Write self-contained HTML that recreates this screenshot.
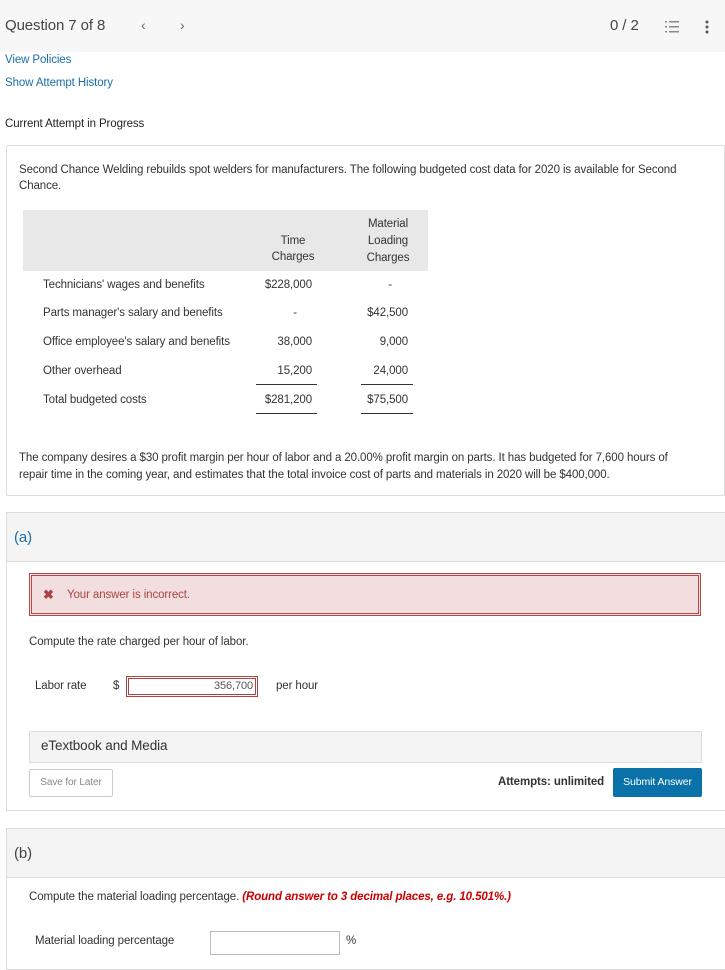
<!DOCTYPE html><html><head><style>
body{margin:0;width:725px;height:965px;overflow:hidden;font-family:"Liberation Sans",sans-serif;font-size:11.5px;color:#333;background:#fff;position:relative;letter-spacing:-0.1px}
.a{position:absolute;white-space:nowrap}
a{color:#1a6fa8;text-decoration:none}
.r{text-align:right}
</style></head><body>
<div class="a" style="left:0;top:0;width:725px;height:52px;background:#f7f7f7"></div>
<div class="a" style="left:5px;top:17px;font-size:15px;color:#444">Question 7 of 8</div>
<div class="a" style="left:141px;top:17px;font-size:14px;color:#666">&lsaquo;</div>
<div class="a" style="left:180px;top:17px;font-size:14px;color:#666">&rsaquo;</div>
<div class="a" style="left:610px;top:17px;font-size:15px;color:#444">0 / 2</div>
<svg class="a" style="left:665px;top:21px" width="14" height="12"><g fill="#888"><rect x="4" y="0" width="10" height="1.5"/><rect x="4" y="5" width="10" height="1.5"/><rect x="4" y="10" width="10" height="1.5"/><rect x="0" y="0" width="2" height="1.5"/><rect x="0" y="5" width="2" height="1.5"/><rect x="0" y="10" width="2" height="1.5"/></g></svg>
<svg class="a" style="left:705px;top:20px" width="4" height="14"><g fill="#555"><circle cx="2" cy="2" r="1.5"/><circle cx="2" cy="7" r="1.5"/><circle cx="2" cy="12" r="1.5"/></g></svg>
<a class="a" style="left:5px;top:54px">View Policies</a>
<a class="a" style="left:5px;top:77px">Show Attempt History</a>
<div class="a" style="left:5px;top:118px;color:#222">Current Attempt in Progress</div>

<div class="a" style="left:6px;top:145px;width:717px;height:349px;border:1px solid #ddd;border-radius:2px"></div>
<div class="a" style="left:19px;top:162px;line-height:16px">Second Chance Welding rebuilds spot welders for manufacturers. The following budgeted cost data for 2020 is available for Second<br>Chance.</div>
<div class="a" style="left:23px;top:210px;width:405px;height:61px;background:#e8e8e8"></div>
<div class="a" style="left:253px;top:233px;width:80px;text-align:center;line-height:16px">Time<br>Charges</div>
<div class="a" style="left:348px;top:216px;width:80px;text-align:center;line-height:17px">Material<br>Loading<br>Charges</div>
<div class="a" style="left:43px;top:279px">Technicians' wages and benefits</div>
<div class="a" style="left:43px;top:307px">Parts manager's salary and benefits</div>
<div class="a" style="left:43px;top:336px">Office employee's salary and benefits</div>
<div class="a" style="left:43px;top:365px">Other overhead</div>
<div class="a" style="left:43px;top:394px">Total budgeted costs</div>
<div class="a r" style="left:240px;width:72px;top:279px">$228,000</div>
<div class="a r" style="left:240px;width:57px;top:307px">-</div>
<div class="a r" style="left:240px;width:72px;top:336px">38,000</div>
<div class="a r" style="left:240px;width:72px;top:365px">15,200</div>
<div class="a r" style="left:240px;width:72px;top:394px">$281,200</div>
<div class="a r" style="left:330px;width:62px;top:279px">-</div>
<div class="a r" style="left:330px;width:78px;top:307px">$42,500</div>
<div class="a r" style="left:330px;width:78px;top:336px">9,000</div>
<div class="a r" style="left:330px;width:78px;top:365px">24,000</div>
<div class="a r" style="left:330px;width:78px;top:394px">$75,500</div>
<div class="a" style="left:256px;top:384px;width:61px;border-top:1px solid #333"></div>
<div class="a" style="left:256px;top:413px;width:61px;border-top:1px solid #333"></div>
<div class="a" style="left:361px;top:384px;width:52px;border-top:1px solid #333"></div>
<div class="a" style="left:361px;top:413px;width:52px;border-top:1px solid #333"></div>
<div class="a" style="left:19px;top:450px;line-height:17px">The company desires a $30 profit margin per hour of labor and a 20.00% profit margin on parts. It has budgeted for 7,600 hours of<br>repair time in the coming year, and estimates that the total invoice cost of parts and materials in 2020 will be $400,000.</div>

<div class="a" style="left:6px;top:512px;width:720px;height:297px;border:1px solid #ddd"></div>
<div class="a" style="left:7px;top:513px;width:718px;height:48px;background:#f4f4f4;border-bottom:1px solid #ddd"></div>
<div class="a" style="left:14px;top:529px;font-size:15px;color:#1a6fa8">(a)</div>
<div class="a" style="left:29px;top:573px;width:670px;height:41px;background:#f2dede;border:1px solid #b04a4a;box-shadow:inset 0 0 0 1px #f2dede,inset 0 0 0 2px #b04a4a"></div>
<div class="a" style="left:43px;top:587px;color:#a94442;font-weight:bold;font-size:13px">✖</div>
<div class="a" style="left:67px;top:589px;color:#a94442">Your answer is incorrect.</div>
<div class="a" style="left:29px;top:636px">Compute the rate charged per hour of labor.</div>
<div class="a" style="left:35px;top:680px">Labor rate</div>
<div class="a" style="left:113px;top:680px">$</div>
<div class="a r" style="left:126px;top:676px;width:126px;height:19px;border:1px solid #a94442;box-shadow:inset 0 0 0 1px #fff,inset 0 0 0 2px #a94442;line-height:19px;padding-right:4px;font-size:11px;color:#555">356,700</div>
<div class="a" style="left:276px;top:680px">per hour</div>
<div class="a" style="left:29px;top:731px;width:671px;height:30px;background:#f4f4f4;border:1px solid #ddd"></div>
<div class="a" style="left:41px;top:738px;font-size:13.5px">eTextbook and Media</div>
<div class="a" style="left:29px;top:769px;width:82px;height:26px;border:1px solid #ccc;border-radius:2px;font-size:10px;color:#888;line-height:26px;text-align:center">Save for Later</div>
<div class="a" style="left:498px;top:776px;font-weight:bold;color:#333">Attempts: unlimited</div>
<div class="a" style="left:613px;top:768px;width:89px;height:29px;background:#0a72a8;border-radius:2px;color:#fff;font-size:10.5px;line-height:29px;text-align:center">Submit Answer</div>

<div class="a" style="left:6px;top:828px;width:720px;height:140px;border:1px solid #ddd"></div>
<div class="a" style="left:7px;top:829px;width:718px;height:48px;background:#f4f4f4;border-bottom:1px solid #ddd"></div>
<div class="a" style="left:14px;top:845px;font-size:15px;color:#444">(b)</div>
<div class="a" style="left:29px;top:891px">Compute the material loading percentage. <b style="color:#c00;font-style:italic">(Round answer to 3 decimal places, e.g. 10.501%.)</b></div>
<div class="a" style="left:35px;top:935px">Material loading percentage</div>
<div class="a" style="left:210px;top:931px;width:128px;height:22px;border:1px solid #bbb"></div>
<div class="a" style="left:346px;top:935px">%</div>
</body></html>
